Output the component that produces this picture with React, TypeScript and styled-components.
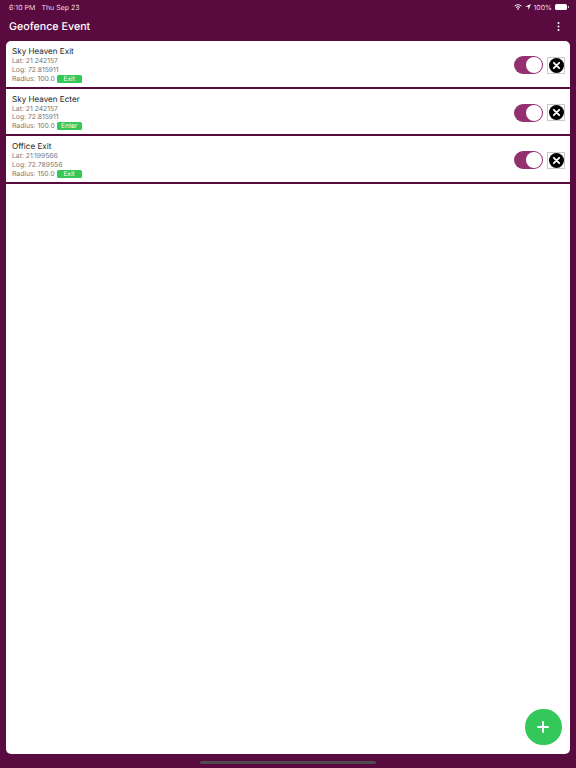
import React from "react";
import styled, { createGlobalStyle } from "styled-components";

const Global = createGlobalStyle`
  html, body { margin: 0; padding: 0; }
  body {
    background: #590a3e;
    font-family: Inter, "Liberation Sans", sans-serif;
    text-rendering: geometricPrecision;
  }
`;

const Page = styled.div`
  position: relative;
  width: 576px;
  height: 768px;
  background: #590a3e;
  display: flex;
  flex-direction: column;
  overflow: hidden;
`;

const StatusBar = styled.div`
  height: 14px;
  padding: 0 9px;
  display: flex;
  align-items: center;
  justify-content: space-between;
  color: #e9dbe4;
  font-size: 7px;
`;

const StatusLeft = styled.div`
  display: flex;
  gap: 6px;
`;

const StatusRight = styled.div`
  display: flex;
  align-items: center;
  gap: 2.5px;
`;

const Battery = styled.span`
  position: relative;
  display: inline-block;
  width: 12.5px;
  height: 6px;
  background: #fff;
  border-radius: 1.5px;
  &::after {
    content: "";
    position: absolute;
    right: -1.5px;
    top: 2px;
    width: 1px;
    height: 2px;
    background: #d9c5d2;
  }
`;

const TitleBar = styled.div`
  height: 25px;
  margin-bottom: 2px;
  padding: 0 16px 0 9px;
  display: flex;
  align-items: center;
  justify-content: space-between;
`;

const Title = styled.h1`
  margin: 0;
  color: #fff;
  font-size: 10.7px;
  font-weight: 500;
`;

const Panel = styled.div`
  flex: 1;
  margin: 0 6px 14.5px;
  background: #fff;
  border-radius: 5px;
  overflow: hidden;
  display: flex;
  flex-direction: column;
`;

const Row = styled.div`
  box-sizing: border-box;
  height: 47.5px;
  flex: none;
  padding: 4px 5px 0 6px;
  border-bottom: 2.5px solid #590a3e;
  display: flex;
  align-items: flex-start;
  justify-content: space-between;
`;

const Info = styled.div`
  display: flex;
  flex-direction: column;
`;

const Name = styled.div`
  font-size: 8.1px;
  line-height: 12px;
  color: #222;
`;

const Coord = styled.div`
  font-size: 6.8px;
  line-height: 8.6px;
  color: #777;
  &:first-of-type {
    margin-top: 0.6px;
  }
`;

const RadiusLine = styled.div`
  display: flex;
  align-items: center;
  gap: 2px;
  margin-top: 0.4px;
  font-size: 6.8px;
  line-height: 8.6px;
  color: #777;
`;

const Tag = styled.span`
  width: 25px;
  height: 8px;
  background: #34c759;
  color: #fff;
  border-radius: 1.5px;
  font-size: 6.6px;
  line-height: 8px;
  display: flex;
  align-items: center;
  justify-content: center;
`;

const Controls = styled.div`
  margin-top: 11px;
  display: flex;
  align-items: center;
  gap: 4px;
`;

const Toggle = styled.div`
  width: 29px;
  height: 18px;
  border-radius: 9px;
  background: #94306f;
  position: relative;
`;

const Knob = styled.span`
  position: absolute;
  top: 1px;
  right: 1px;
  width: 16px;
  height: 16px;
  border-radius: 50%;
  background: #fff;
`;

const CloseBox = styled.div`
  width: 18px;
  height: 17px;
  box-sizing: border-box;
  border: 1px solid #c9c9c9;
  display: flex;
  align-items: center;
  justify-content: center;
`;

const Fab = styled.div`
  position: absolute;
  left: 525px;
  top: 708.5px;
  width: 36.5px;
  height: 36.5px;
  border-radius: 50%;
  background: #34c759;
  display: flex;
  align-items: center;
  justify-content: center;
`;

const HomeBar = styled.div`
  position: absolute;
  left: 200px;
  top: 760.5px;
  width: 176px;
  height: 3px;
  border-radius: 1.5px;
  background: #4d4d4d;
`;

const events = [
  { name: "Sky Heaven Exit", lat: "21.242157", log: "72.815911", radius: "100.0", tag: "Exit" },
  { name: "Sky Heaven Ecter", lat: "21.242157", log: "72.815911", radius: "100.0", tag: "Enter" },
  { name: "Office Exit", lat: "21.199566", log: "72.789556", radius: "150.0", tag: "Exit" },
];

const CloseIcon = () => (
  <svg width="15" height="15" viewBox="0 0 15 15">
    <circle cx="7.5" cy="7.5" r="7.5" fill="#000" />
    <path d="M4.8 4.8l5.4 5.4M10.2 4.8l-5.4 5.4" stroke="#fff" strokeWidth="1.8" strokeLinecap="round" />
  </svg>
);

export default function App() {
  return (
    <Page>
      <Global />
      <StatusBar>
        <StatusLeft>
          <span>6:10 PM</span>
          <span>Thu Sep 23</span>
        </StatusLeft>
        <StatusRight>
          <svg width="8" height="6" viewBox="0 0 8 6" fill="none" stroke="#fff">
            <path d="M.6 2.1a4.9 4.9 0 0 1 6.8 0" strokeWidth="1" />
            <path d="M2 3.5a3 3 0 0 1 4 0" strokeWidth="1" />
            <path d="M4 6L2.9 4.7a1.6 1.6 0 0 1 2.2 0z" fill="#fff" stroke="none" />
          </svg>
          <svg width="6" height="6" viewBox="0 0 6 6">
            <path d="M6 0L0 2.7h3.3V6z" fill="#fff" />
          </svg>
          <span>100%</span>
          <Battery />
        </StatusRight>
      </StatusBar>
      <TitleBar>
        <Title>Geofence Event</Title>
        <svg width="3" height="9" viewBox="0 0 3 9">
          <circle cx="1.5" cy="1" r="1" fill="#fff" />
          <circle cx="1.5" cy="4.5" r="1" fill="#fff" />
          <circle cx="1.5" cy="8" r="1" fill="#fff" />
        </svg>
      </TitleBar>
      <Panel>
        {events.map((e) => (
          <Row key={e.name}>
            <Info>
              <Name>{e.name}</Name>
              <Coord>Lat: {e.lat}</Coord>
              <Coord>Log: {e.log}</Coord>
              <RadiusLine>
                Radius: {e.radius}
                <Tag>{e.tag}</Tag>
              </RadiusLine>
            </Info>
            <Controls>
              <Toggle><Knob /></Toggle>
              <CloseBox><CloseIcon /></CloseBox>
            </Controls>
          </Row>
        ))}
      </Panel>
      <Fab>
        <svg width="12" height="12" viewBox="0 0 12 12">
          <path d="M6 1v10M1 6h10" stroke="#fff" strokeWidth="2" strokeLinecap="round" />
        </svg>
      </Fab>
      <HomeBar />
    </Page>
  );
}
